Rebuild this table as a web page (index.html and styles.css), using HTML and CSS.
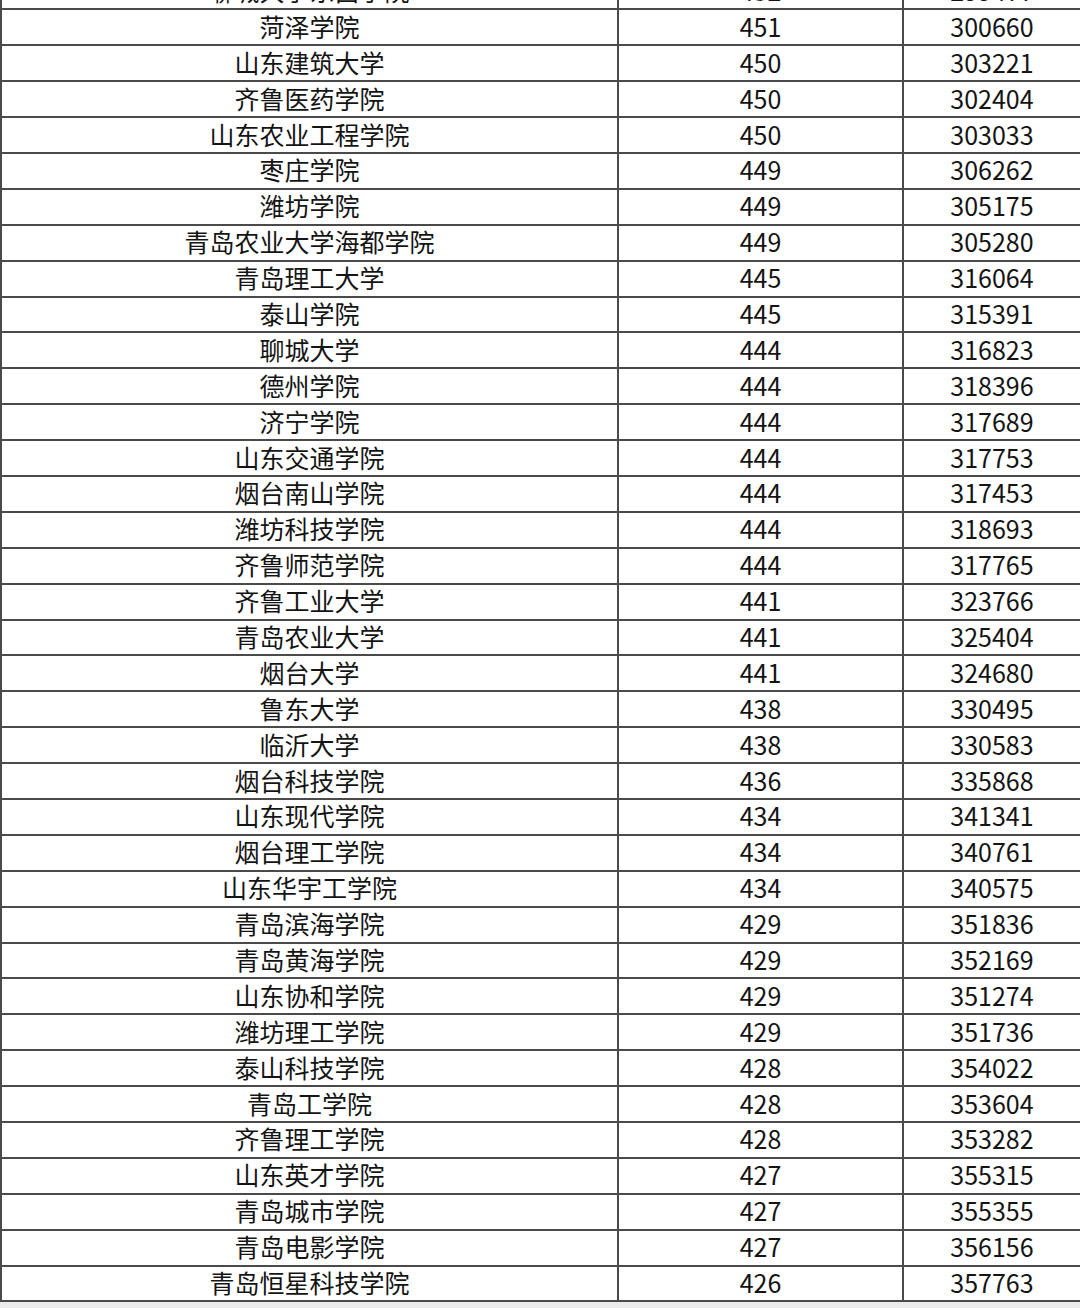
FILE: index.html
```html
<!DOCTYPE html>
<html lang="zh-CN">
<head>
<meta charset="utf-8">
<title>山东高校录取分数线</title>
<link rel="stylesheet" href="styles.css">
</head>
<body>
<div class="sheet">
<table class="scores">
<colgroup><col class="c-name"><col class="c-score"><col class="c-rank"></colgroup>
<tbody>
<tr><td>聊城大学东昌学院</td><td>452</td><td>299477</td></tr>
<tr><td>菏泽学院</td><td>451</td><td>300660</td></tr>
<tr><td>山东建筑大学</td><td>450</td><td>303221</td></tr>
<tr><td>齐鲁医药学院</td><td>450</td><td>302404</td></tr>
<tr><td>山东农业工程学院</td><td>450</td><td>303033</td></tr>
<tr><td>枣庄学院</td><td>449</td><td>306262</td></tr>
<tr><td>潍坊学院</td><td>449</td><td>305175</td></tr>
<tr><td>青岛农业大学海都学院</td><td>449</td><td>305280</td></tr>
<tr><td>青岛理工大学</td><td>445</td><td>316064</td></tr>
<tr><td>泰山学院</td><td>445</td><td>315391</td></tr>
<tr><td>聊城大学</td><td>444</td><td>316823</td></tr>
<tr><td>德州学院</td><td>444</td><td>318396</td></tr>
<tr><td>济宁学院</td><td>444</td><td>317689</td></tr>
<tr><td>山东交通学院</td><td>444</td><td>317753</td></tr>
<tr><td>烟台南山学院</td><td>444</td><td>317453</td></tr>
<tr><td>潍坊科技学院</td><td>444</td><td>318693</td></tr>
<tr><td>齐鲁师范学院</td><td>444</td><td>317765</td></tr>
<tr><td>齐鲁工业大学</td><td>441</td><td>323766</td></tr>
<tr><td>青岛农业大学</td><td>441</td><td>325404</td></tr>
<tr><td>烟台大学</td><td>441</td><td>324680</td></tr>
<tr><td>鲁东大学</td><td>438</td><td>330495</td></tr>
<tr><td>临沂大学</td><td>438</td><td>330583</td></tr>
<tr><td>烟台科技学院</td><td>436</td><td>335868</td></tr>
<tr><td>山东现代学院</td><td>434</td><td>341341</td></tr>
<tr><td>烟台理工学院</td><td>434</td><td>340761</td></tr>
<tr><td>山东华宇工学院</td><td>434</td><td>340575</td></tr>
<tr><td>青岛滨海学院</td><td>429</td><td>351836</td></tr>
<tr><td>青岛黄海学院</td><td>429</td><td>352169</td></tr>
<tr><td>山东协和学院</td><td>429</td><td>351274</td></tr>
<tr><td>潍坊理工学院</td><td>429</td><td>351736</td></tr>
<tr><td>泰山科技学院</td><td>428</td><td>354022</td></tr>
<tr><td>青岛工学院</td><td>428</td><td>353604</td></tr>
<tr><td>齐鲁理工学院</td><td>428</td><td>353282</td></tr>
<tr><td>山东英才学院</td><td>427</td><td>355315</td></tr>
<tr><td>青岛城市学院</td><td>427</td><td>355355</td></tr>
<tr><td>青岛电影学院</td><td>427</td><td>356156</td></tr>
<tr><td>青岛恒星科技学院</td><td>426</td><td>357763</td></tr>
</tbody>
</table>
</div>
</body>
</html>
```
FILE: styles.css
```css
html, body {
  margin: 0;
  padding: 0;
  background: #ececec;
}
.sheet {
  width: 1080px;
  height: 1308px;
  overflow: hidden;
}
.scores {
  width: 1080px;
  margin-top: -27.5px;
  border-collapse: collapse;
  table-layout: fixed;
  background: #ffffff;
  font-family: "Noto Sans CJK SC", "Noto Sans", sans-serif;
  font-size: 25px;
  color: #141414;
}
.c-name { width: 617px; }
.c-score { width: 285px; }
.c-rank { width: 178px; }
.scores tr {
  height: 35.9px;
}
.scores td {
  padding: 0 0 3px;
  border: 2px solid #4a4a4a;
  text-align: center;
  vertical-align: middle;
  line-height: 28px;
  white-space: nowrap;
}
```
